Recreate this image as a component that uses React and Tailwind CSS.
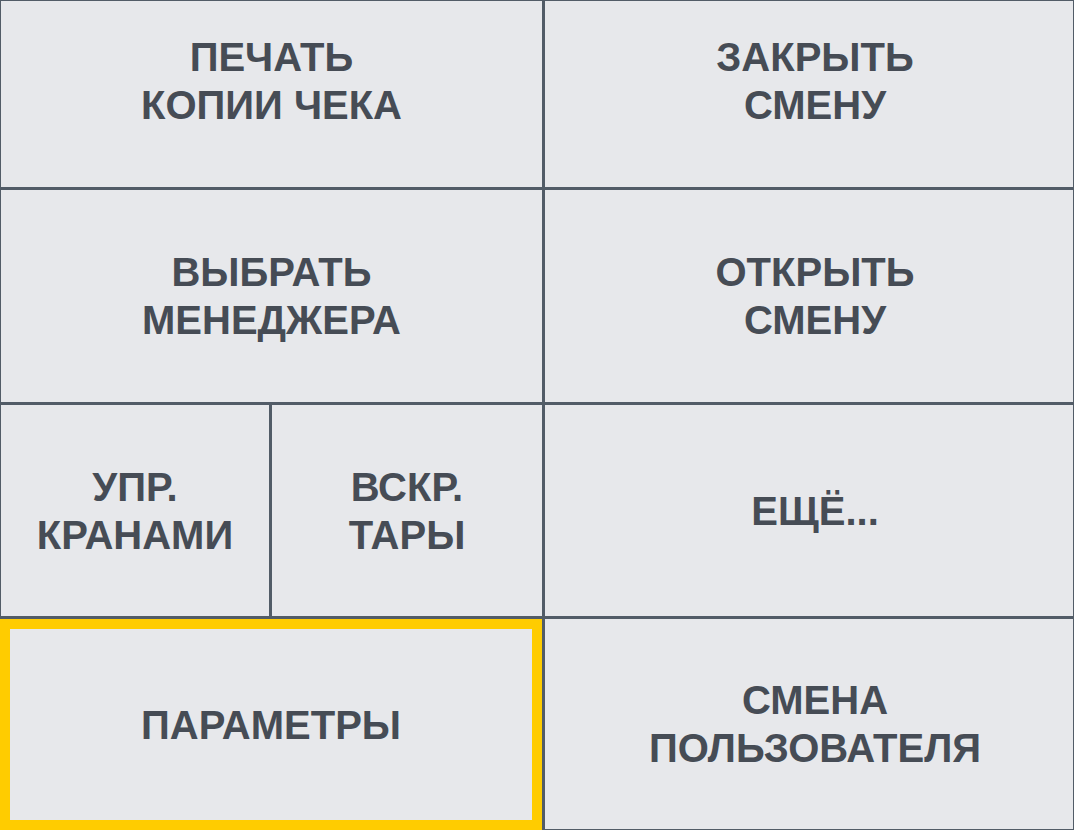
const cellText =
  "flex items-center justify-center text-center bg-[#e7e8eb] text-[#464c55] font-bold uppercase text-[40px] leading-[48px]";

function Tile({ lines, className = "" }) {
  return (
    <button type="button" className={`${cellText} ${className}`}>
      <span>
        {lines.map((line) => (
          <span key={line} className="block">
            {line}
          </span>
        ))}
      </span>
    </button>
  );
}

export default function App() {
  return (
    <div
      className="w-[1074px] h-[830px] bg-[#525c67] p-[1px] grid grid-cols-[541px_1fr] grid-rows-[186px_212px_211px_1fr] gap-[3px]"
      style={{ fontFamily: '"Liberation Sans", Arial, sans-serif' }}
    >
      <Tile lines={["Печать", "копии чека"]} className="pb-[26px]" />
      <Tile lines={["Закрыть", "смену"]} className="pb-[26px] pl-[12px]" />

      <Tile lines={["Выбрать", "менеджера"]} />
      <Tile lines={["Открыть", "смену"]} className="pl-[12px]" />

      <div className="flex gap-[3px]">
        <Tile lines={["Упр.", "кранами"]} className="w-[268px]" />
        <Tile lines={["Вскр.", "тары"]} className="flex-1" />
      </div>
      <Tile lines={["Ещё..."]} className="pl-[12px]" />

      <Tile lines={["Параметры"]} className="border-[10px] border-[#ffcc00] -ml-[1px] -mb-[1px]" />
      <Tile lines={["Смена", "пользователя"]} className="pl-[12px]" />
    </div>
  );
}
